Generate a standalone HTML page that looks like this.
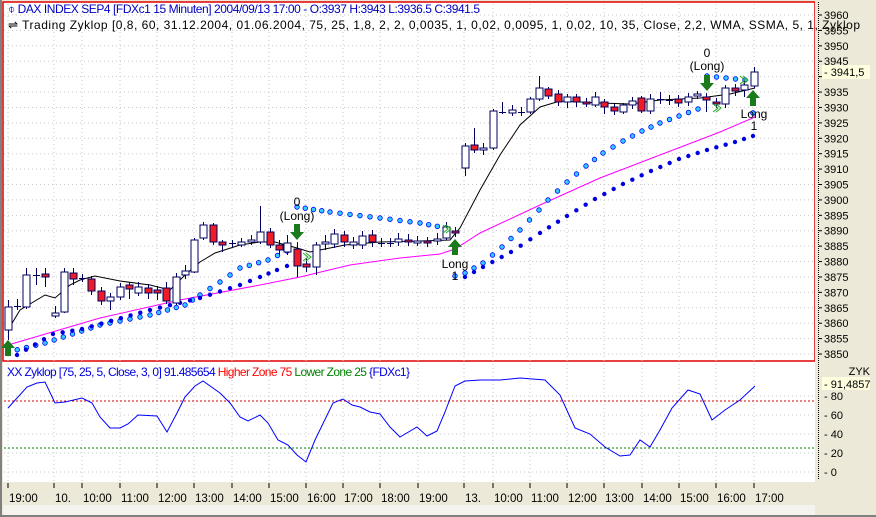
<!DOCTYPE html>
<html><head><meta charset="utf-8"><style>
html,body{margin:0;padding:0;background:#ece9d8;}
body{width:876px;height:517px;overflow:hidden;position:relative;font-family:"Liberation Sans",sans-serif;}
svg{position:absolute;left:0;top:0;}
</style></head><body>
<svg id="s" width="876" height="517" xmlns="http://www.w3.org/2000/svg" font-family="Liberation Sans, sans-serif" font-size="11">
<rect x="0" y="0" width="876" height="517" fill="#ece9d8"/>
<rect x="0" y="0" width="2" height="517" fill="#808080"/>
<rect x="0" y="515" width="876" height="2" fill="#808080"/>
<rect x="3" y="505" width="812" height="10" fill="#f4f3ee"/>
<rect x="3" y="2" width="812" height="480" fill="#ffffff"/>
<rect x="3" y="2" width="812" height="359" fill="#fff" stroke="#e00000" stroke-width="1.5"/>
<rect x="815" y="0" width="61" height="505" fill="#ece9d8"/>
<line x1="818.5" y1="2" x2="818.5" y2="480" stroke="#000" stroke-dasharray="1 1"/>
<g id="grid"></g>
<g id="ind"></g>
<g id="main"></g>
<text x="8" y="13" fill="#0000c0" font-size="12" textLength="472" lengthAdjust="spacing">⌽ DAX INDEX SEP4   [FDXc1  15 Minuten] 2004/09/13 17:00 - O:3937 H:3943 L:3936.5 C:3941.5</text>
<text x="8" y="29" fill="#000" font-size="12" textLength="852" lengthAdjust="spacing">⇌ Trading Zyklop [0,8, 60, 31.12.2004, 01.06.2004, 75, 25, 1,8, 2, 2, 0,0035, 1, 0,02, 0,0095, 1, 0,02, 10, 35, Close, 2,2, WMA, SSMA, 5, 1, Zyklop</text>
<text x="7" y="376" fill="#0000e0" font-size="12" textLength="403" lengthAdjust="spacing">XX Zyklop [75, 25, 5, Close, 3, 0] 91.485654 <tspan fill="#ff0000">Higher Zone 75</tspan> <tspan fill="#008000">Lower Zone 25</tspan> {FDXc1}</text>
<text x="870" y="375" text-anchor="end" fill="#000">ZYK</text>
<g id="axis" fill="#000"></g>
</svg>
<script>
var NS="http://www.w3.org/2000/svg";
function el(p,t,a,txt){var e=document.createElementNS(NS,t);for(var k in a)e.setAttribute(k,a[k]);if(txt!=null)e.textContent=txt;document.getElementById(p).appendChild(e);return e;}
var ax="axis";
for(var i=0;i<=22;i++){var p=3960-i*5,y=15+i*15.41;
 el("grid","line",{x1:4,x2:814,y1:y,y2:y,stroke:"#c8c8c8","stroke-dasharray":"1 3"});
 el(ax,"line",{x1:819,x2:822,y1:y,y2:y,stroke:"#000"});
 if(p!=3940)el(ax,"text",{x:824,y:y+4},String(p));}
el(ax,"rect",{x:822,y:65,width:48,height:14,fill:"#ffffe0"});
el(ax,"text",{x:824,y:76},"- 3941,5");
[[80,396],[60,415],[40,434],[20,453],[0,472]].forEach(function(v){
 el("grid","line",{x1:4,x2:814,y1:v[1],y2:v[1],stroke:"#c8c8c8","stroke-dasharray":"1 3"});
 el(ax,"text",{x:824,y:v[1]+4},"- "+v[0]);});
el(ax,"rect",{x:822,y:377,width:48,height:13,fill:"#ffffe0"});
el(ax,"text",{x:824,y:388},"- 91,4857");
var tl=[[8,"19:00"],[54,"10."],[82,"10:00"],[120,"11:00"],[157,"12:00"],[194,"13:00"],[232,"14:00"],[269,"15:00"],[306,"16:00"],[343,"17:00"],[380,"18:00"],[418,"19:00"],[464,"13."],[493,"10:00"],[530,"11:00"],[567,"12:00"],[604,"13:00"],[642,"14:00"],[679,"15:00"],[716,"16:00"],[754,"17:00"]];
tl.forEach(function(t){var x=t[0];
 el("grid","line",{x1:x,x2:x,y1:4,y2:481,stroke:"#c8c8c8","stroke-dasharray":"1 3"});
 el(ax,"line",{x1:x,x2:x,y1:483,y2:488,stroke:"#000"});
 el(ax,"text",{x:x+1,y:502,"font-size":"11.5"},t[1]);});
el("ind","line",{x1:4,x2:814,y1:401,y2:401,stroke:"#e00000","stroke-dasharray":"2 2"});
el("ind","line",{x1:4,x2:814,y1:448,y2:448,stroke:"#008000","stroke-dasharray":"2 2"});
var ip=[[8,408],[27,387],[37,383],[45,382],[55,403],[65,402],[82,398],[92,403],[100,417],[110,428],[120,428],[128,424],[138,415],[157,416],[167,432],[177,413],[185,397],[195,386],[203,381],[220,393],[230,403],[240,417],[248,421],[260,415],[268,423],[278,440],[288,445],[297,455],[306,462],[315,440],[333,403],[343,399],[352,405],[360,407],[370,412],[380,414],[390,427],[400,437],[417,427],[427,436],[437,431],[445,412],[455,386],[465,381],[480,380],[500,380],[520,378],[545,380],[560,395],[575,428],[590,434],[605,447],[620,456],[630,455],[640,440],[650,447],[660,430],[672,408],[688,390],[700,394],[712,420],[725,410],[740,400],[755,386]];
el("ind","polyline",{points:ip.join(" "),fill:"none",stroke:"#0000ff","stroke-width":"1"});
var mg=[[8,345],[100,318],[180,300],[260,285],[300,277],[350,265],[400,258],[440,254],[455,249],[480,233],[540,205],[600,178],[660,155],[720,132],[755,117]];
el("main","polyline",{points:mg.join(" "),fill:"none",stroke:"#ff00ff"});
var bl=[[8,330],[20,310],[45,295],[55,298],[70,285],[80,280],[95,276],[120,281],[150,285],[170,290],[185,275],[200,262],[215,253],[240,245],[260,242],[275,242],[297,248],[310,252],[320,250],[345,245],[380,242],[420,241],[450,240],[460,228],[480,190],[500,155],[520,125],[540,107],[560,101],[600,103],[630,104],[660,100],[700,98],[730,94],[755,88]];
el("main","polyline",{points:bl.join(" "),fill:"none",stroke:"#000"});
function dots(pts,light){var step=9.3;for(var i=0;i<pts.length-1;i++){var a=pts[i],b=pts[i+1],dx=b[0]-a[0],n=Math.max(1,Math.round(dx/step));
 for(var j=0;j<n;j++){var x=a[0]+dx*j/n,y=a[1]+(b[1]-a[1])*j/n;
 if(light)el("main","circle",{cx:x,cy:y,r:2.3,fill:"#33ccff",stroke:"#0000ff","stroke-width":"0.8"});
 else el("main","circle",{cx:x,cy:y,r:2.2,fill:"#0000e0"});}}
 var l=pts[pts.length-1];if(light)el("main","circle",{cx:l[0],cy:l[1],r:2.3,fill:"#33ccff",stroke:"#0000ff","stroke-width":"0.8"});else el("main","circle",{cx:l[0],cy:l[1],r:2.2,fill:"#0000e0"});}
dots([[8,352],[45,343],[100,325],[150,315],[185,305],[200,295],[220,282],[240,268],[268,260],[287,251]],true);
dots([[297,207],[330,212],[380,218],[420,223],[446,228]],true);
dots([[455,276],[465,273],[483,263],[502,247],[520,230],[539,210],[548,200],[567,182],[586,166],[603,153],[623,141],[642,131],[660,123],[679,116],[698,109]],true);
dots([[707,76],[745,80]],true);
dots([[753,113],[753,113]],true);
dots([[17,355],[53,334],[82,329],[150,310],[200,298],[240,285],[260,277],[277,270],[287,266]],false);
dots([[465,277],[483,267],[511,252],[540,233],[567,216],[595,199],[623,184],[651,171],[679,159],[707,150],[735,142],[753,136]],false);
var cs=[[8,"W",307,330,300,340],[17,"X",306,306,299,310],[26,"W",275,307,268,309],[36,"X",275,275,268,285],[45,"R",274,277,268,287],[55,"W",313,316,306,318],[64,"W",272,312,268,313],[73,"R",273,279,268,285],[82,"X",278,278,274,282],[91,"R",279,291,276,295],[101,"R",291,301,287,305],[110,"W",297,301,293,310],[120,"W",287,297,283,300],[129,"R",285,289,282,299],[138,"W",287,293,282,296],[148,"R",288,293,284,299],[157,"R",290,293,286,300],[166,"R",288,301,282,304],[176,"W",277,303,273,305],[185,"W",271,275,265,279],[194,"W",240,272,238,273],[203,"W",225,238,222,240],[213,"R",225,242,223,245],[222,"R",242,245,240,252],[232,"X",243,243,240,247],[241,"W",242,245,238,247],[251,"W",240,242,235,245],[260,"W",232,242,206,244],[270,"R",232,245,228,248],[279,"R",245,250,240,255],[287,"W",243,252,235,255],[297,"R",249,266,242,277],[306,"R",264,267,258,272],[316,"W",245,267,242,275],[325,"W",242,244,235,250],[334,"W",234,244,229,248],[344,"R",235,242,231,247],[353,"W",242,245,237,249],[362,"W",236,245,231,249],[372,"R",235,242,230,247],[381,"X",243,243,238,247],[390,"X",243,243,238,247],[398,"W",239,242,233,246],[408,"R",240,242,234,246],[417,"W",241,243,236,246],[427,"R",241,243,237,247],[437,"W",239,241,233,245],[446,"W",227,238,222,240],[455,"R",231,233,227,237],[465,"W",146,168,143,176],[474,"R",145,150,128,153],[483,"W",148,150,143,155],[493,"W",111,148,109,150],[502,"X",112,112,102,114],[512,"W",110,113,105,116],[521,"X",112,112,107,116],[530,"W",99,112,97,114],[539,"W",88,99,76,101],[548,"R",89,96,87,99],[558,"R",94,102,90,106],[567,"W",97,102,94,108],[576,"R",97,102,94,107],[586,"R",102,103,98,107],[595,"W",97,105,92,107],[604,"R",102,107,99,114],[614,"R",107,111,104,115],[623,"W",105,112,103,114],[632,"W",101,105,97,109],[641,"R",98,111,96,113],[650,"W",99,111,94,114],[660,"X",99,99,92,104],[669,"X",100,100,95,105],[678,"R",99,103,95,107],[688,"W",97,102,93,106],[697,"W",94,96,91,99],[706,"R",97,100,93,112],[716,"R",102,104,98,108],[725,"W",88,104,85,108],[735,"R",88,91,84,96],[744,"W",85,90,81,97],[754,"W",72,86,67,88]];
cs.forEach(function(c){var x=c[0],t=c[1],a=Math.min(c[2],c[3]),b=Math.max(c[2],c[3]);
 el("main","line",{x1:x+0.5,x2:x+0.5,y1:c[4],y2:c[5],stroke:"#000060"});
 if(t=="X"){el("main","line",{x1:x-3,x2:x+4,y1:a+0.5,y2:a+0.5,stroke:"#000060"});return;}
 el("main","rect",{x:x-3,y:a,width:7,height:Math.max(2,b-a),fill:t=="R"?"#ee1c24":"#fff",stroke:"#000060","stroke-width":"1"});});
function arrow(x,y,down){var g="#1b7a1b",p;
 if(down)p=[[x-3,y],[x+3,y],[x+3,y+8],[x+7,y+8],[x,y+16],[x-7,y+8],[x-3,y+8]];
 else p=[[x,y],[x+7,y+8],[x+3,y+8],[x+3,y+16],[x-3,y+16],[x-3,y+8],[x-7,y+8]];
 el("main","polygon",{points:p.join(" "),fill:g});}
arrow(297,224,true);arrow(8,340,false);arrow(455,239,false);arrow(707,75,true);arrow(753,90,false);
function tx(x,y,s){el("main","text",{x:x,y:y,"text-anchor":"middle",fill:"#000","font-size":"12"},s);}
tx(297,206,"0");tx(297,220,"(Long)");tx(455,268,"Long");tx(455,280,"1");
tx(707,57,"0");tx(707,70,"(Long)");tx(754,118,"Long");tx(754,130,"1");
function chev(x,y){el("main","polyline",{points:[[x,y],[x+5,y+4],[x,y+8]].join(" "),fill:"none",stroke:"#22aa22"});el("main","polyline",{points:[[x+3,y],[x+8,y+4],[x+3,y+8]].join(" "),fill:"none",stroke:"#22aa22"});}
chev(303,253);chev(443,225);chev(713,104);chev(740,76);
</script>
</body></html>
